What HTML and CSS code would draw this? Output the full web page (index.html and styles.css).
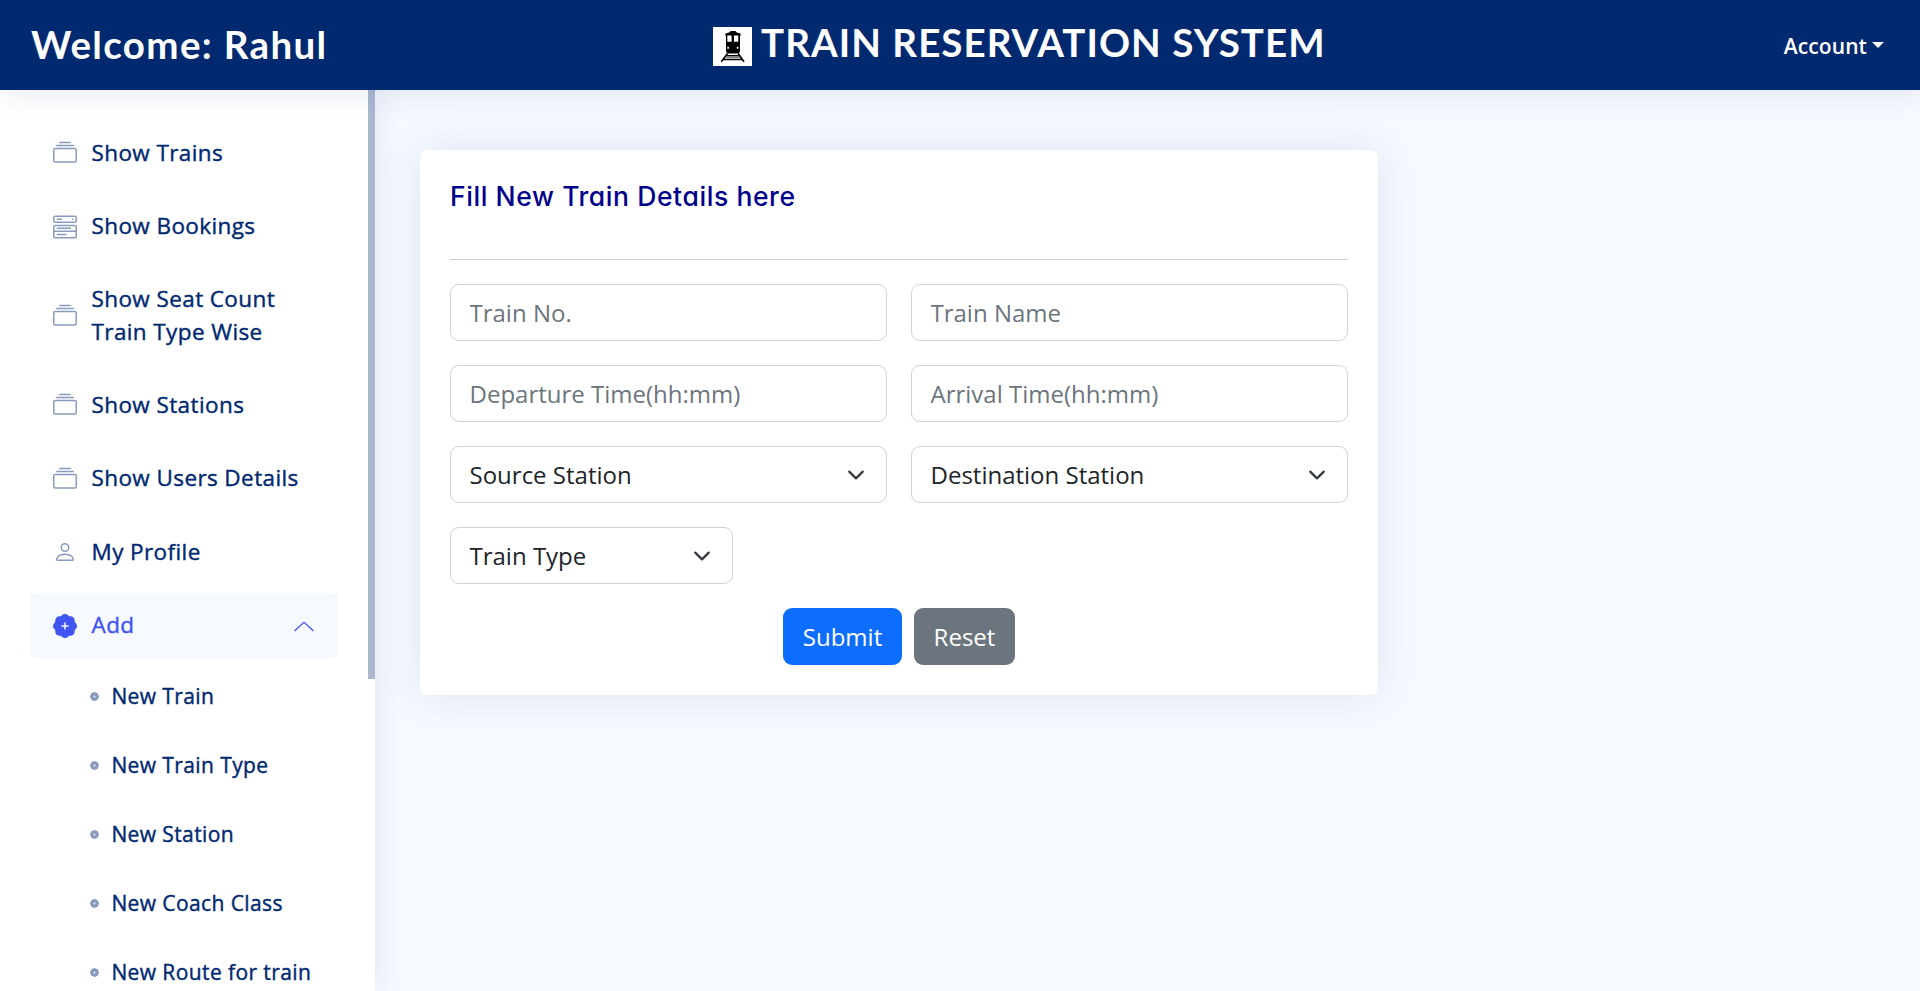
FILE: index.html
```html
<!DOCTYPE html>
<html lang="en">
<head>
<meta charset="utf-8">
<title>Train Reservation System</title>
<link rel="stylesheet" href="styles.css">
</head>
<body>
<svg class="sprite" width="0" height="0">
  <symbol id="collection" viewBox="0 0 16 16"><path d="M2.5 3.5a.5.5 0 0 1 0-1h11a.5.5 0 0 1 0 1h-11zm2-2a.5.5 0 0 1 0-1h7a.5.5 0 0 1 0 1h-7zM0 13a1.5 1.5 0 0 0 1.5 1.5h13A1.5 1.5 0 0 0 16 13V6a1.5 1.5 0 0 0-1.5-1.5h-13A1.5 1.5 0 0 0 0 6v7zm1.5.5A.5.5 0 0 1 1 13V6a.5.5 0 0 1 .5-.5h13a.5.5 0 0 1 .5.5v7a.5.5 0 0 1-.5.5h-13z"/></symbol>
  <symbol id="menu-bars" viewBox="0 0 16 16"><g fill="none" stroke="currentColor"><rect x=".5" y=".9" width="15" height="4" rx="1"/><rect x=".5" y="7" width="15" height="8.2" rx="1"/><path d="M.5 10.8h15M2.5 2.9H6M12.5 2.9h1M2.5 8.9H12M2.5 13H9"/></g></symbol>
  <symbol id="person" viewBox="0 0 16 16"><path d="M8 8a3 3 0 1 0 0-6 3 3 0 0 0 0 6zm2-3a2 2 0 1 1-4 0 2 2 0 0 1 4 0zm4 8c0 1-1 1-1 1H3s-1 0-1-1 1-4 6-4 6 3 6 4zm-1-.004c-.001-.246-.154-.986-.832-1.664C11.516 10.68 10.289 10 8 10c-2.29 0-3.516.68-4.168 1.332-.678.678-.83 1.418-.832 1.664h10z"/></symbol>
  <symbol id="plus-badge" viewBox="0 0 16 16"><path fill-rule="evenodd" d="M10.067.87a2.89 2.89 0 0 0-4.134 0l-.622.638-.89-.011a2.89 2.89 0 0 0-2.924 2.924l.01.89-.636.622a2.89 2.89 0 0 0 0 4.134l.637.622-.011.89a2.89 2.89 0 0 0 2.924 2.924l.89-.01.622.636a2.89 2.89 0 0 0 4.134 0l.622-.637.89.011a2.89 2.89 0 0 0 2.924-2.924l-.01-.89.636-.622a2.89 2.89 0 0 0 0-4.134l-.637-.622.011-.89a2.89 2.89 0 0 0-2.924-2.924l-.89.01-.622-.636zM8.5 6v1.500H10a.5.5 0 0 1 0 1H8.500V10a.5.5 0 0 1-1 0V8.500H6a.5.5 0 0 1 0-1h1.500V6a.5.5 0 0 1 1 0z"/></symbol>
  <symbol id="chevron" viewBox="0 0 16 16"><path fill="none" stroke="#343a40" stroke-linecap="round" stroke-linejoin="round" stroke-width="2" d="m2 5 6 6 6-6"/></symbol>
</svg>

<header class="header">
  <div class="welcome">Welcome: Rahul</div>
  <div class="brand">
    <svg class="logo" viewBox="0 0 39 39">
      <path fill="#fff" d="M0 0h39v39H0z"/>
      <path d="M17.500 4h5l.7 1.300 4.300 1.200.4 2H27V24l-1.200 2.500H14.200L13 24V8.500h-.9l.4-2 4.300-1.200z"/>
      <path fill="#fff" d="M14.300 8.500h4.300v6.300h-4.300zM21 8.500h4.300v6.300H21zM14.300 19.800h1.600v2h-1.600zM23.800 19.800h1.600v2h-1.600z"/>
      <path fill="none" stroke="#000" stroke-width="1.600" d="M14.500 26.500 8.300 34.700M25.200 26.500l5.800 8.200M10.500 32.500H29M13.500 28.800h13"/>
      <path fill="none" stroke="#777" d="M13 30.600h14"/>
    </svg>
    <h1>TRAIN RESERVATION SYSTEM</h1>
  </div>
  <div class="account">Account<span class="caret"></span></div>
</header>

<div class="page">
  <aside class="sidebar">
    <nav class="nav">
      <a class="link"><svg><use href="#collection"/></svg><span>Show Trains</span></a>
      <a class="link"><svg><use href="#menu-bars"/></svg><span>Show Bookings</span></a>
      <a class="link"><svg><use href="#collection"/></svg><span>Show Seat Count Train Type Wise</span></a>
      <a class="link"><svg><use href="#collection"/></svg><span>Show Stations</span></a>
      <a class="link"><svg><use href="#collection"/></svg><span>Show Users Details</span></a>
      <a class="link"><svg><use href="#person"/></svg><span>My Profile</span></a>
      <a class="link active"><svg><use href="#plus-badge"/></svg><span>Add</span><svg class="arrow" viewBox="0 0 20 10"><path d="M.5 9.500 10 .8l9.500 8.700"/></svg></a>
      <div class="subnav">
        <a><svg><use href="#plus-badge"/></svg>New Train</a>
        <a><svg><use href="#plus-badge"/></svg>New Train Type</a>
        <a><svg><use href="#plus-badge"/></svg>New Station</a>
        <a><svg><use href="#plus-badge"/></svg>New Coach Class</a>
        <a><svg><use href="#plus-badge"/></svg>New Route for train</a>
      </div>
    </nav>
    <div class="scroll-thumb"></div>
  </aside>
  <main class="main">
    <section class="card">
      <h2>Fill New Train Details here</h2>
      <form class="form">
        <input class="field" placeholder="Train No.">
        <input class="field" placeholder="Train Name">
        <input class="field" placeholder="Departure Time(hh:mm)">
        <input class="field" placeholder="Arrival Time(hh:mm)">
        <div class="field select">Source Station<svg><use href="#chevron"/></svg></div>
        <div class="field select">Destination Station<svg><use href="#chevron"/></svg></div>
        <div class="field select narrow">Train Type<svg><use href="#chevron"/></svg></div>
        <div class="buttons">
          <button class="btn submit" type="button">Submit</button>
          <button class="btn reset" type="button">Reset</button>
        </div>
      </form>
    </section>
  </main>
</div>
</body>
</html>
```
FILE: styles.css
```css
* { box-sizing: border-box; }

body {
  margin: 0;
  height: 991px;
  overflow: hidden;
  background: #f6f9ff;
  color: #212529;
  font-family: "Open Sans", sans-serif;
  font-size: 24px;
}

.sprite { display: block; position: absolute; }

.header {
  position: relative;
  z-index: 2;
  display: flex;
  justify-content: space-between;
  height: 90px;
  padding: 0 36px 0 31px;
  background: #012970;
  box-shadow: 0 3px 30px rgba(1, 41, 112, .1);
  color: #fff;
}

.welcome, .brand h1 {
  margin: 0;
  font-family: Lato, sans-serif;
  font-weight: 700;
  font-size: 38.5px;
  line-height: 48px;
  white-space: nowrap;
}
.welcome { width: 682px; padding-top: 20px; letter-spacing: 1.35px; }
.brand { display: flex; flex: 1; padding-top: 18px; }
.brand h1 { margin-left: 9px; letter-spacing: 1.05px; }
.logo { width: 39px; height: 39px; margin-top: 9px; }

.account {
  display: flex;
  align-items: center;
  gap: 5px;
  padding-top: 2px;
  font-size: 21px;
  font-weight: 600;
  letter-spacing: .1px;
}
.caret {
  border: 6.5px solid transparent;
  border-top-color: #fff;
  border-bottom: 0;
  margin-top: -3px;
}

.page { display: flex; height: 901px; }

.sidebar {
  display: flex;
  width: 375px;
  background: #fff;
  box-shadow: 0 0 30px rgba(1, 41, 112, .1);
}
.nav { width: 368px; padding: 30px 30px 0; }
.scroll-thumb { width: 7px; height: 589px; background: #aab7cf; }

.link {
  display: flex;
  align-items: center;
  width: 308px;
  min-height: 66px;
  margin-bottom: 7.5px;
  padding: 14.5px 22.5px 15.5px;
  border-radius: 6px;
  color: #012970;
  font-size: 22.5px;
  font-weight: 500;
  line-height: 33.75px;
  letter-spacing: .4px;
  -webkit-text-stroke: .4px currentColor;
}
.link svg {
  flex: none;
  width: 24px;
  height: 24px;
  margin: 1px 15px 0 0;
  fill: currentColor;
  color: #899bbd;
}
.link.active, .link.active svg { color: #4154f1; }
.link.active { background: #f6f9ff; }
.link .arrow {
  width: 20px;
  height: 11px;
  margin: 2px 1.5px 0 auto;
  fill: none;
  stroke: currentColor;
  stroke-width: 1.3;
}

.subnav a {
  display: flex;
  align-items: center;
  height: 61.5px;
  margin-bottom: 7.5px;
  padding: 0 0 2px 60px;
  color: #012970;
  font-size: 21px;
  font-weight: 500;
  letter-spacing: .4px;
  white-space: nowrap;
  -webkit-text-stroke: .4px currentColor;
}
.subnav svg {
  width: 9px;
  height: 9px;
  margin: 2px 12.4px 0 0;
  fill: #899bbd;
}

.main { flex: 1; padding: 60px 45px; }
.card {
  width: 958px;
  height: 545px;
  padding: 30px;
  border-radius: 7.5px;
  background: #fff;
  box-shadow: 0 0 45px rgba(1, 41, 112, .1);
}
.card h2 {
  height: 80px;
  margin: 0 0 24px;
  border-bottom: 1px solid #cccdce;
  color: #00008b;
  font-family: Inter, sans-serif;
  font-feature-settings: "cv11";
  font-size: 26.5px;
  font-weight: 500;
  line-height: 32px;
  letter-spacing: .58px;
}

.form { display: grid; grid-template-columns: 437px 437px; gap: 24px; }
.field {
  width: 100%;
  height: 57px;
  padding: 0 18px 0 18.5px;
  border: 1px solid #ced4da;
  border-radius: 9px;
  background: #fff;
  color: #212529;
  font: 400 24px/36px "Open Sans", sans-serif;
}
.field::placeholder { color: #6c757d; opacity: 1; }
.select { display: flex; align-items: center; justify-content: space-between; }
.select svg { width: 18px; height: 18px; margin-right: 3px; }
.narrow { width: 283px; }

.buttons { grid-column: 1 / -1; display: flex; justify-content: center; gap: 12px; }
.btn {
  height: 57px;
  padding: 0;
  border: 0;
  border-radius: 9px;
  color: #fff;
  font: 400 24px/36px "Open Sans", sans-serif;
}
.submit { width: 119px; background: #0d6efd; }
.reset { width: 101px; background: #6c757d; }
```
